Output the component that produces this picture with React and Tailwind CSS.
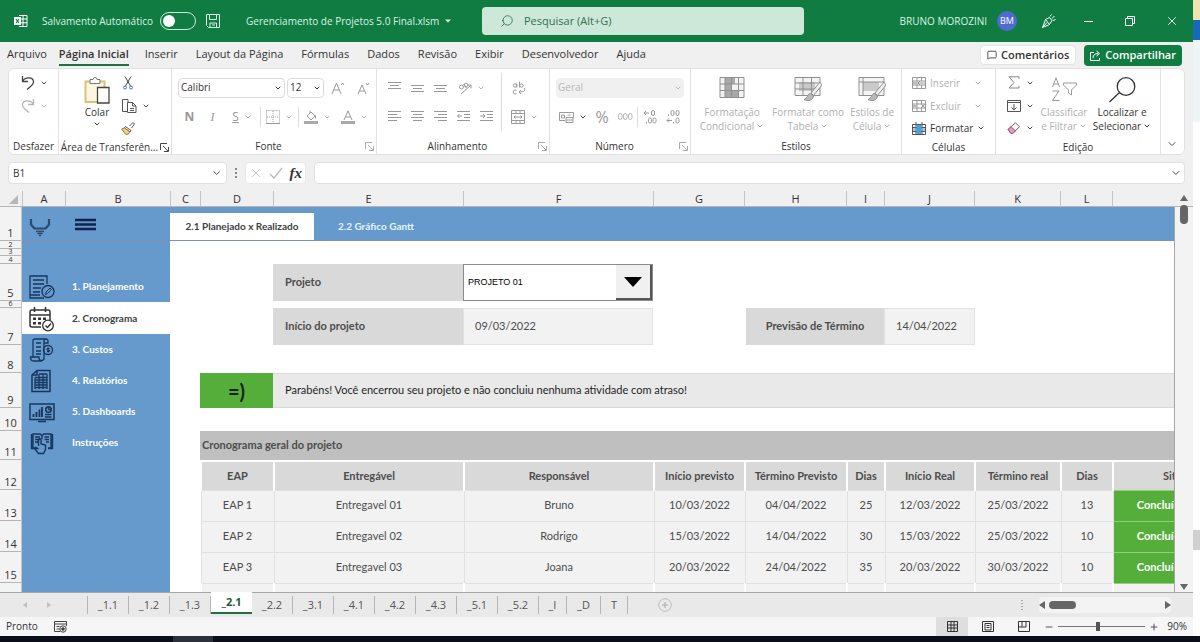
import React from 'react';
import { ChevronDown, MessageSquare, Minus, Plus, Search, X } from 'lucide-react';

const ribbonTabs = [
  'Arquivo',
  'Página Inicial',
  'Inserir',
  'Layout da Página',
  'Fórmulas',
  'Dados',
  'Revisão',
  'Exibir',
  'Desenvolvedor',
  'Ajuda'
];

const columns = [
  { name: 'A', width: 'w-[43px]' },
  { name: 'B', width: 'w-[105px]' },
  { name: 'C', width: 'w-[30px]' },
  { name: 'D', width: 'w-[73px]' },
  { name: 'E', width: 'w-[190px]' },
  { name: 'F', width: 'w-[190px]' },
  { name: 'G', width: 'w-[91px]' },
  { name: 'H', width: 'w-[102px]' },
  { name: 'I', width: 'w-[38px]' },
  { name: 'J', width: 'w-[90px]' },
  { name: 'K', width: 'w-[86px]' },
  { name: 'L', width: 'w-[52px]' }
];

// rows 2, 3, 4 and 6 are only spacers, so their numbers are set smaller
const rowHeaders = [
  { n: 1, height: 'h-[34px]' },
  { n: 2, height: 'h-2', small: true },
  { n: 3, height: 'h-[7px]', small: true },
  { n: 4, height: 'h-2', small: true },
  { n: 5, height: 'h-[37px]' },
  { n: 6, height: 'h-[7px]', small: true },
  { n: 7, height: 'h-[37px]' },
  { n: 8, height: 'h-7' },
  { n: 9, height: 'h-[35px]' },
  { n: 10, height: 'h-[23px]' },
  { n: 11, height: 'h-[29px]' },
  { n: 12, height: 'h-[30px]' },
  { n: 13, height: 'h-[31px]' },
  { n: 14, height: 'h-[31px]' },
  { n: 15, height: 'h-[31px]' }
];

const tableHead = [
  { label: 'EAP', width: 'w-[73px]' },
  { label: 'Entregável', width: 'w-[190px]' },
  { label: 'Responsável', width: 'w-[190px]' },
  { label: 'Início previsto', width: 'w-[91px]' },
  { label: 'Término Previsto', width: 'w-[102px]' },
  { label: 'Dias', width: 'w-[38px]' },
  { label: 'Início Real', width: 'w-[90px]' },
  { label: 'Término real', width: 'w-[86px]' },
  { label: 'Dias', width: 'w-[52px]' },
  { label: 'Situação', width: 'w-[142px]' }
];

const tableRows = [
  ['EAP 1', 'Entregavel 01', 'Bruno', '10/03/2022', '04/04/2022', '25', '12/03/2022', '25/03/2022', '13'],
  ['EAP 2', 'Entregavel 02', 'Rodrigo', '15/03/2022', '14/04/2022', '30', '15/03/2022', '25/03/2022', '10'],
  ['EAP 3', 'Entregavel 03', 'Joana', '20/03/2022', '24/04/2022', '35', '20/03/2022', '30/03/2022', '10']
];

const sheetTabs = ['_1.1', '_1.2', '_1.3', '_2.1', '_2.2', '_3.1', '_4.1', '_4.2', '_4.3', '_5.1', '_5.2'];

const Svg = ({ w = 16, h = 16, className = '', children }) => (
  <svg
    width={w}
    height={h}
    viewBox={`0 0 ${w} ${h}`}
    className={`shrink-0 ${className}`}
    fill="none"
    stroke="currentColor"
    strokeWidth="1"
    aria-hidden="true"
  >
    {children}
  </svg>
);

const Chevron = ({ className = 'text-[#444]' }) => (
  <ChevronDown size={8} strokeWidth={3} className={`shrink-0 ${className}`} />
);

/* ---------- title bar ---------- */

const ExcelLogo = () => (
  <Svg w={14} h={14} className="text-white">
    <path d="M5 1.5h8v11H5M5 5h8M5 8.8h8M9 1.5v11" />
    <path d="M0 3h7v8H0z" fill="#fff" stroke="none" />
    <path d="M2 5l3 4M5 5L2 9" stroke="#107c41" strokeWidth="1.2" />
  </Svg>
);

const TitleBar = () => (
  <header className="flex h-[42px] items-center bg-[#107c41] pl-[14px] text-[10px] text-white">
    <div className="flex w-[468px] shrink-0 items-center">
      <ExcelLogo />
      <label htmlFor="autosave" className="ml-[14px] whitespace-nowrap text-[#d6f5e3]">Salvamento Automático</label>
      <input
        id="autosave"
        type="checkbox"
        className="relative ml-[7px] h-[18px] w-9 shrink-0 appearance-none rounded-full border border-[#c9efd9] before:absolute before:left-0.5 before:top-0.5 before:size-3 before:rounded-full before:bg-white"
      />
      <button aria-label="Salvar" className="ml-[10px] text-[#d6f5e3]">
        <Svg w={14} h={14}>
          <path d="M.5.5h13v13h-11l-2-2zM3.5.5v5h7v-5M4 13.500V9h6.500v4.500M6 11h3" />
        </Svg>
      </button>
      <button className="ml-[26px] flex items-center gap-1.5 whitespace-nowrap text-[#d6f5e3]">
        Gerenciamento de Projetos 5.0 Final.xlsm
        <Svg w={6} h={4}>
          <path d="M0 .5h6l-3 3z" fill="currentColor" stroke="none" />
        </Svg>
      </button>
    </div>
    <label className="flex h-7 w-[322px] items-center rounded bg-[#cde8d9] pl-[18px] text-[11px] text-[#33704f]">
      <Search size={14} strokeWidth={1.5} className="shrink-0 -scale-x-100" />
      <input
        aria-label="Pesquisar"
        placeholder="Pesquisar (Alt+G)"
        className="ml-2.5 w-full bg-transparent outline-none placeholder:text-[#33704f]"
      />
    </label>
    <div className="flex flex-1 items-center justify-end pr-3.5">
      <span className="whitespace-nowrap text-[#d6f5e3]">BRUNO MOROZINI</span>
      <span className="ml-2.5 flex size-5 items-center justify-center rounded-full bg-[#4f6bd0] text-[9px]">BM</span>
      <button aria-label="Novidades" className="ml-6">
        <Svg w={15} h={15}>
          <path d="M1.500 13.500L4.500 5.500 8.500 3.500 11 6.500 8.500 10.500zM1.500 13.500L6 8.500M4.500 5.500l4 5M9 2.500L10.500.500M11 4.500L13.500 2M12 6.500l2.500-1" />
        </Svg>
      </button>
      <button aria-label="Minimizar" className="ml-7 h-px w-[9px] bg-white" />
      <button aria-label="Restaurar" className="ml-8">
        <Svg w={10} h={10}>
          <path d="M.5 2.500h7v7h-7zM2.500 2V.5h7v7H8" />
        </Svg>
      </button>
      <button aria-label="Fechar" className="ml-[30px]">
        <X size={14} strokeWidth={1.5} />
      </button>
    </div>
  </header>
);

const TabBar = () => (
  <nav className="flex h-[26px] items-center pl-[7px] pr-[11px] text-[11px] text-[#333]">
    <div className="flex flex-1 gap-[18px]">
      {ribbonTabs.map((tab) => (
        <button
          key={tab}
          className={
            tab === 'Página Inicial'
              ? '-ml-1.5 -mr-0.5 h-[22px] border-b-2 border-[#1e7145] font-semibold whitespace-nowrap'
              : 'h-[22px] border-b-2 border-transparent whitespace-nowrap'
          }
        >
          {tab}
        </button>
      ))}
    </div>
    <button className="flex h-5 items-center gap-1 rounded border border-[#e4e4e4] bg-white px-1.5 font-semibold">
      <MessageSquare size={10} />
      Comentários
    </button>
    <button className="ml-2 flex h-[21px] items-center gap-1 rounded bg-[#107c41] px-1.5 font-semibold text-white">
      <Svg w={11} h={11}>
        <path d="M4 2.500H.5v8h9V8M3 8c0-3 2-4.500 5-4.500M6.500 1l3 2.500-3 2.500" />
      </Svg>
      Compartilhar
    </button>
  </nav>
);

/* ---------- ribbon ---------- */

const Group = ({ title, width, launcher, launcherColor = 'text-[#aaa]', children }) => (
  <section className={`flex shrink-0 flex-col border-r border-[#e1e1e1] pt-0.5 ${width}`}>
    <div className="flex h-[68px]">{children}</div>
    <div className="flex items-center text-[10px] leading-4 text-[#333]">
      <h2 className="flex-1 text-center whitespace-nowrap">{title}</h2>
      {launcher && (
        <button aria-label={`Opções de ${title}`} className={`mr-0.5 ${launcherColor}`}>
          <Svg w={9} h={9}>
            <path d="M.5 7V.5H7M3 3l5 5M8.500 4v4.500H4" />
          </Svg>
        </button>
      )}
    </div>
  </section>
);

const Tool = ({ label, width = 'w-[23px]', height = 'h-[29px]', drop, dropColor = 'text-[#b5b5b5]', children }) => (
  <button aria-label={label} className={`flex shrink-0 items-center justify-center gap-[5px] ${height} ${width}`}>
    {children}
    {drop && <Chevron className={dropColor} />}
  </button>
);

const Divider = () => <span className="h-5 w-px shrink-0 bg-[#dcdcdc]" />;

const BigTool = ({ icon, lines, width, muted = true }) => (
  <button
    className={`flex shrink-0 flex-col items-center pt-1.5 text-[10px] leading-[14px] ${width} ${muted ? 'text-[#b0b0b0]' : 'text-[#333]'}`}
  >
    <span className="flex h-7 items-start">{icon}</span>
    <span className="whitespace-nowrap">{lines[0]}</span>
    <span className="flex items-center gap-0.5 whitespace-nowrap">
      {lines[1]}
      <Chevron className="" />
    </span>
  </button>
);

const Lines = ({ rows }) => (
  <Svg w={13} h={13} className="text-[#999]">
    {rows.map(([x1, x2], i) => (
      <path key={i} d={`M${x1} ${i * 3 + 1.5}H${x2}`} />
    ))}
  </Svg>
);

const RibbonSelect = ({ label, value, className, muted }) => (
  <span
    className={`relative flex h-5 items-center rounded-sm ${muted ? 'bg-[#f0f0f0] text-[#b8b8b8]' : 'border border-[#dcdcdc] bg-white text-[#333]'} ${className}`}
  >
    <select aria-label={label} className="h-full w-full appearance-none bg-transparent px-0.5 text-[10px] outline-none">
      <option>{value}</option>
    </select>
    <Chevron className="pointer-events-none absolute right-0.5" />
  </span>
);

const FontGroup = () => (
  <Group title="Fonte" width="w-[205px]" launcher>
    <div className="flex flex-col pl-1.5 pt-0.5">
      <div className="flex h-[29px] items-center gap-0.5">
        <RibbonSelect label="Fonte" value="Calibri" className="w-[107px]" />
        <RibbonSelect label="Tamanho" value="12" className="w-[37px]" />
        <Tool label="Aumentar fonte">
          <Svg w={14} h={14} className="text-[#999]">
            <path d="M1 13L5.500 2 10 13M2.500 9h6M10 4l1.500-2L13 4" />
          </Svg>
        </Tool>
        <Tool label="Diminuir fonte">
          <Svg w={14} h={14} className="text-[#999]">
            <path d="M2 13l4-9 4 9M3.500 10h5M10 2l1.500 2L13 2" />
          </Svg>
        </Tool>
      </div>
      <div className="flex h-[29px] items-center text-[12px] text-[#999]">
        <Tool label="Negrito"><b>N</b></Tool>
        <Tool label="Itálico"><i className="font-['Liberation_Serif']">I</i></Tool>
        <Tool label="Sublinhado" width="w-9" drop><u>S</u></Tool>
        <Divider />
        <Tool label="Bordas" width="w-[37px]" drop>
          <Svg w={14} h={14} className="text-[#999]">
            <path d="M.5.5h13v13M.5.5v13M7 1v12M1 7h12" strokeDasharray="1 1" />
            <path d="M0 13.500h14" />
          </Svg>
        </Tool>
        <Divider />
        <Tool label="Cor de preenchimento" width="w-[37px]" drop>
          <Svg w={14} h={14} className="text-[#999]">
            <path d="M3 6l4-4 4 4-4 4zM6 3V.5M11.500 5.500v3" />
            <path d="M0 12.500h14" strokeWidth="3" stroke="#aaa" />
          </Svg>
        </Tool>
        <Tool label="Cor da fonte" width="w-9" drop>
          <Svg w={14} h={14} className="text-[#999]">
            <path d="M3 10L7 .8 11 10M4.500 7h5" />
            <path d="M0 12.500h14" strokeWidth="3" stroke="#aaa" />
          </Svg>
        </Tool>
      </div>
    </div>
  </Group>
);

const AlignGroup = () => (
  <Group title="Alinhamento" width="w-[173px]" launcher>
    <div className="flex items-start pl-1.5 pt-0.5">
      <div className="flex w-[118px] flex-col">
        <div className="flex h-[29px] items-center">
          <Tool label="Alinhar em cima"><Lines rows={[[0, 13], [2, 11], [0, 13]]} /></Tool>
          <Tool label="Alinhar no meio"><Lines rows={[[0, 0], [0, 13], [2, 11], [0, 13]]} /></Tool>
          <Tool label="Alinhar embaixo"><Lines rows={[[0, 0], [0, 13], [2, 11], [0, 13]]} /></Tool>
          <Tool label="Orientação" width="w-[38px]" drop>
            <Svg w={14} h={14} className="text-[#999]">
              <path d="M3 13L13 4M13 4H9.500M13 4v3.500" />
              <circle cx="3.500" cy="6" r="2" />
              <path d="M5.500 3l3 4" />
              <circle cx="8" cy="4" r="1.800" />
            </Svg>
          </Tool>
        </div>
        <div className="flex h-[29px] items-center">
          <Tool label="Alinhar à esquerda"><Lines rows={[[0, 13], [0, 9], [0, 13], [0, 9]]} /></Tool>
          <Tool label="Centralizar"><Lines rows={[[0, 13], [2, 11], [0, 13], [2, 11]]} /></Tool>
          <Tool label="Alinhar à direita"><Lines rows={[[0, 13], [4, 13], [0, 13], [4, 13]]} /></Tool>
          <Tool label="Diminuir recuo">
            <Svg w={13} h={13} className="text-[#999]">
              <path d="M0 1.500h13M7 4.500h6M7 7.500h6M0 10.500h13M5 6H.5M2.500 4l-2 2 2 2" />
            </Svg>
          </Tool>
          <Tool label="Aumentar recuo">
            <Svg w={13} h={13} className="text-[#999]">
              <path d="M0 1.500h13M7 4.500h6M7 7.500h6M0 10.500h13M0 6h5M3 4l2 2-2 2" />
            </Svg>
          </Tool>
        </div>
      </div>
      <span className="h-[58px] w-px bg-[#dcdcdc]" />
      <div className="flex flex-col">
        <Tool label="Quebrar texto" width="w-[33px]">
          <Svg w={14} h={14} className="text-[#999]">
            <circle cx="3" cy="4.500" r="1.700" />
            <path d="M4.800 2.500v4M7.500.5v6M4.500 9.500a2 2 0 1 0 0 3M12.500 7c1 3-1 4-5 4M9 9l-2 2 2 2" />
            <circle cx="9.500" cy="4.500" r="1.700" />
          </Svg>
        </Tool>
        <Tool label="Mesclar" width="w-[44px]" drop>
          <Svg w={14} h={14} className="text-[#999]">
            <path d="M.5.5h13v13H.5zM.5 3.500h13M.5 10.500h13M5 .5v3M9 .5v3M5 10.500v3M9 10.500v3M3 7h8M4.500 5.500L3 7l1.500 1.500M9.500 5.500L11 7 9.500 8.500" />
          </Svg>
        </Tool>
      </div>
    </div>
  </Group>
);

const NumberGroup = () => (
  <Group title="Número" width="w-[141px]" launcher>
    <div className="flex flex-col pl-1.5 pt-0.5">
      <div className="flex h-[29px] items-center">
        <RibbonSelect label="Formato" value="Geral" muted className="w-[128px]" />
      </div>
      <div className="flex h-[29px] items-center text-[#999]">
        <Tool label="Moeda" width="w-[34px]" drop dropColor="text-[#444]">
          <Svg w={15} h={13}>
            <path d="M.5 2.500h14v5H7M.5 2.500v8H6M8.500 5h3M2.500 5h3v3h-3z" />
            <path d="M7 7.500h7v5H7zM7 10h7" />
          </Svg>
        </Tool>
        <span className="w-6 text-center text-[16px]">%</span>
        <Tool label="Separador de milhares">
          <Svg w={15} h={8} className="text-[#b5b5b5]">
            <rect x=".5" y=".5" width="3.500" height="6" rx="1.700" />
            <rect x="5.500" y=".5" width="3.500" height="6" rx="1.700" />
            <rect x="10.500" y=".5" width="3.500" height="6" rx="1.700" />
          </Svg>
        </Tool>
        <Divider />
        <Tool label="Aumentar casas">
          <Svg w={14} h={14}>
            <path d="M6 3H1M3 1L1 3l2 2M3.500 12v1.500" />
            <rect x="8.500" y=".5" width="3" height="5" rx="1.500" />
            <rect x="5.500" y="8" width="3" height="5" rx="1.500" />
            <rect x="10" y="8" width="3" height="5" rx="1.500" />
          </Svg>
        </Tool>
        <Tool label="Diminuir casas">
          <Svg w={14} h={14}>
            <path d="M1 10.500h5M3 8.500l-2 2 2 2M2.500 4.500V6M7.500 12v1.500" />
            <rect x="5" y=".5" width="3" height="5" rx="1.500" />
            <rect x="10" y=".5" width="3" height="5" rx="1.500" />
            <rect x="10" y="8" width="3" height="5" rx="1.500" />
          </Svg>
        </Tool>
      </div>
    </div>
  </Group>
);

const CondFormatIcon = () => (
  <Svg w={26} h={21} className="text-[#8f8f8f]">
    <path d="M1 .5h24v20H1z" fill="#f2f2f2" />
    <path d="M6 1h10v6H6zM6 7h6v6H6zM6 13h13v7H6z" fill="#a9a9a9" stroke="none" />
    <path d="M1 7h24M1 13.500h24M6 .5v20M19.500.5v20M12.500.5v20" />
  </Svg>
);

const TableBrushIcon = ({ plain }) => (
  <Svg w={28} h={26} className="text-[#8f8f8f]">
    <path d="M1 .5h25v18H1z" fill="#f4f4f4" />
    <path d="M5 5h16v9H5z" fill="#c9c9c9" stroke="none" />
    <path d={plain ? 'M1 5h25M5 .5v18' : 'M1 6h25M1 12h25M9 .5v18M17.500.5v18'} />
    <path d="M26 5l-9 11 2.500 2.500L28 8z" fill="#eee" />
    <path d="M16.500 16.500c-3 0-2.500 4-6.500 6 4 2 9 1 9.500-3.500z" fill="#b9b9b9" />
  </Svg>
);

const CellIcon = ({ remove }) => (
  <Svg w={14} h={12} className="text-[#999]">
    <path d="M.5.5h13v11H.5zM.5 4h13M.5 8h13M5 .5v11M9.500.5v3.500M9.500 8v3.500" />
    <path d={remove ? 'M9 4l4 4M13 4L9 8' : 'M13 6H6M8 4L6 6l2 2'} />
    <path d="M1 4.500h4v3H1z" fill="#bbb" stroke="none" />
  </Svg>
);

const Ribbon = () => (
  <div className="mx-2 flex h-[87px] overflow-hidden rounded-md border border-[#e1e1e1] bg-white">
    <Group title="Desfazer" width="w-[50px]">
      <div className="flex flex-col pl-[11px]">
        <Tool label="Desfazer" width="w-7" height="h-[23px]" drop dropColor="text-[#444]">
          <Svg w={14} h={15} className="text-[#444]">
            <path d="M1.500 1v5.500H7M1.500 6.500C4 1.500 12.500 1.500 12.500 7c0 3-4 5-6.500 7.500" strokeWidth="1.3" />
          </Svg>
        </Tool>
        <Tool label="Refazer" width="w-7" height="h-[23px]" drop dropColor="text-[#c4c4c4]">
          <Svg w={14} h={15} className="text-[#b5b5b5]">
            <path d="M12.500 1v5.500H7M12.500 6.500C10 1.500 1.500 1.500 1.500 7c0 3 4 5 6.500 7.500" strokeWidth="1.3" />
          </Svg>
        </Tool>
      </div>
    </Group>

    <Group title="Área de Transferên..." width="w-[113px]" launcher launcherColor="text-[#444]">
      <button className="ml-5 flex w-9 flex-col items-center pt-1.5 text-[10px] leading-4 text-[#333]">
        <Svg w={26} h={27}>
          <path d="M1.500 4.500h19V25h-19z" fill="#fbf6df" stroke="#d8c27a" strokeWidth="2" />
          <path d="M6 6.500v-4h3a2 2 0 0 1 4 0h3v4z" fill="#fff" stroke="#777" />
          <path d="M13.500 10.500H25V26H13.500z" fill="#fff" stroke="#444" strokeWidth="1.3" />
        </Svg>
        <span>Colar</span>
        <Chevron />
      </button>
      <div className="flex flex-col items-start pl-1">
        <Tool label="Recortar" width="w-[18px]" height="h-[23px]">
          <Svg w={10} h={14} className="text-[#444]">
            <path d="M2 .5L7.500 10M8 .5L2.500 10" />
            <circle cx="2" cy="11.500" r="1.500" stroke="#3a78b5" />
            <circle cx="8" cy="11.500" r="1.500" stroke="#3a78b5" />
          </Svg>
        </Tool>
        <Tool label="Copiar" width="w-[34px]" height="h-[23px]" drop dropColor="text-[#444]">
          <Svg w={15} h={14} className="text-[#555]">
            <path d="M5 12.500H.5V.5H6V3M5.500 3.500h5l3.500 3.500v6.500H5.500zM10.500 3.500V7H14M8 9.500h4M8 11.500h4" />
          </Svg>
        </Tool>
        <Tool label="Pincel de formatação" width="w-[18px]" height="h-[22px]">
          <Svg w={14} h={13}>
            <path d="M8.500 4L12 .5l1.500 1.500L10.500 6" stroke="#555" />
            <path d="M4.500 4.500l5.500 4-1 1.500L3.500 6z" fill="#fff" stroke="#555" />
            <path d="M3.500 6L9 10c-1 2-3 2.500-4 2.500L.5 7z" fill="#f1d384" stroke="#a07a2a" />
          </Svg>
        </Tool>
      </div>
    </Group>

    <FontGroup />
    <AlignGroup />
    <NumberGroup />

    <Group title="Estilos" width="w-[211px]">
      <div className="flex pl-[3px]">
        <BigTool icon={<CondFormatIcon />} lines={['Formatação', 'Condicional']} width="w-[76px]" />
        <BigTool icon={<TableBrushIcon />} lines={['Formatar como', 'Tabela']} width="w-[76px]" />
        <BigTool icon={<TableBrushIcon plain />} lines={['Estilos de', 'Célula']} width="w-[52px]" />
      </div>
    </Group>

    <Group title="Células" width="w-[94px]">
      <div className="flex flex-col pl-2.5 text-[10px] leading-4 text-[#b0b0b0]">
        <button className="flex h-[23px] items-center gap-1">
          <CellIcon />
          <span className="w-10 text-left">Inserir</span>
          <Chevron className="" />
        </button>
        <button className="flex h-[23px] items-center gap-1">
          <CellIcon remove />
          <span className="w-10 text-left">Excluir</span>
          <Chevron className="" />
        </button>
        <button className="flex h-[22px] items-center gap-1 text-[#333]">
          <Svg w={14} h={13} className="text-[#555]">
            <path d="M.5 2.500h13v10H.5zM4 0v12.500M10 0v12.500M.5 5.500h13M.5 9.500h13" />
            <path d="M4.500 3h5v9h-5z" fill="#4aa0dc" stroke="none" />
            <path d="M1 6h12v3H1z" fill="#4aa0dc" fillOpacity=".5" stroke="none" />
          </Svg>
          Formatar
          <Chevron />
        </button>
      </div>
    </Group>

    <Group title="Edição" width="w-[165px]">
      <div className="flex flex-col pl-1.5">
        <Tool label="Soma" width="w-9" height="h-[23px]" drop dropColor="text-[#444]">
          <Svg w={14} h={13} className="text-[#888]">
            <path d="M12 3V.8H2L7 6.500 2 12h10v-2.200" />
          </Svg>
        </Tool>
        <Tool label="Preencher" width="w-9" height="h-[23px]" drop dropColor="text-[#444]">
          <Svg w={14} h={12} className="text-[#555]">
            <path d="M.5.5h13v11H.5zM.5 2.500h13M7 4v6M4.500 7.500L7 10l2.500-2.500" />
          </Svg>
        </Tool>
        <Tool label="Limpar" width="w-9" height="h-[22px]" drop dropColor="text-[#444]">
          <Svg w={14} h={13}>
            <path d="M1 7.500L8.500.8l4 4L5.500 11.500H4z" fill="#fff" stroke="#666" />
            <path d="M1 7.500l3-2.800L8.500 9l-3 2.500H4z" fill="#e59ac0" stroke="#a0527c" />
          </Svg>
        </Tool>
      </div>
      <BigTool
        width="w-[52px]"
        lines={['Classificar', 'e Filtrar']}
        icon={
          <Svg w={26} h={25} className="text-[#999]">
            <path d="M1.500 10L5 .8 8.500 10M2.800 7h4.500M1.500 14H8l-6.500 9.500H8.500" />
            <path d="M12.500 6h13v2l-5 5v5l-3-2v-3l-5-5z" />
          </Svg>
        }
      />
      <BigTool
        width="w-[64px]"
        muted={false}
        lines={['Localizar e', 'Selecionar']}
        icon={
          <Svg w={28} h={26}>
            <circle cx="18" cy="9.500" r="8.800" strokeWidth="1.3" />
            <path d="M11.500 15.500L1.500 25" strokeWidth="1.3" />
          </Svg>
        }
      />
    </Group>

    <button aria-label="Recolher faixa" className="ml-auto mr-1.5 self-end pb-1 text-[#444]">
      <ChevronDown size={12} strokeWidth={1.8} />
    </button>
  </div>
);

const FormulaBar = () => (
  <div className="flex h-9 items-center gap-2 px-2 text-[#333]">
    <label className="flex h-[22px] w-[219px] items-center rounded border border-[#e1e1e1] bg-white pl-1 pr-1">
      <input aria-label="Caixa de nome" defaultValue="B1" className="w-full bg-transparent text-[10px] outline-none" />
      <ChevronDown size={12} strokeWidth={1.8} />
    </label>
    <Svg w={2} h={10} className="text-[#888]">
      <path d="M1 0v10" strokeDasharray="2 2" strokeWidth="2" />
    </Svg>
    <div className="flex h-[22px] w-[61px] items-center justify-around rounded border border-[#e8e8e8] bg-white">
      <button aria-label="Cancelar" className="text-[#bbb]">
        <X size={14} strokeWidth={1.5} />
      </button>
      <button aria-label="Inserir" className="text-[#bbb]">
        <Svg w={14} h={12}>
          <path d="M1 7l4 4 8-10" strokeWidth="1.3" />
        </Svg>
      </button>
      <button className="font-['Liberation_Serif'] text-[15px] font-bold italic leading-5">fx</button>
    </div>
    <label className="flex h-[22px] flex-1 items-center rounded border border-[#e1e1e1] bg-white pr-0.5">
      <input aria-label="Barra de fórmulas" className="w-full bg-transparent px-1 text-[11px] outline-none" />
      <ChevronDown size={12} strokeWidth={1.8} />
    </label>
  </div>
);

/* ---------- sheet ---------- */

const ColumnHeader = () => (
  <div className="flex h-4 items-end border-b border-[#b5b5b5] text-[11px] leading-4 text-[#333]">
    <span className="flex h-[15px] w-[23px] shrink-0 items-end justify-end border-r border-[#c4c4c4] pb-0.5 pr-1">
      <Svg w={9} h={9}>
        <path d="M9 0v9H0z" fill="#b8b8b8" stroke="none" />
      </Svg>
    </span>
    {columns.map((col) => (
      <span
        key={col.name}
        className={`flex h-[15px] shrink-0 items-center justify-center border-r border-[#c4c4c4] ${col.width}`}
      >
        {col.name}
      </span>
    ))}
  </div>
);

const RowHeader = () => (
  <div className="flex w-[22px] shrink-0 flex-col border-r border-[#c4c4c4] bg-[#f3f3f3] text-[#333]">
    {rowHeaders.map((row) => (
      <span
        key={row.n}
        className={`flex shrink-0 items-end justify-center border-b border-[#b5b5b5] ${row.height} ${row.small ? 'text-[7px] leading-[6px]' : 'text-[11px] leading-[14px]'}`}
      >
        {row.n}
      </span>
    ))}
  </div>
);

const PlanIcon = () => (
  <Svg w={26} h={25}>
    <path d="M18 9V1H1v22h14M4 5h11M4 9h11M4 13h8M4 17h7M1 20h10" strokeWidth="1.3" />
    <circle cx="19" cy="16.500" r="6" strokeWidth="1.3" />
    <path d="M16.500 19.500l.5-2.500 4-4 1.500 1.500-4 4z" />
  </Svg>
);

const CalendarIcon = () => (
  <Svg w={26} h={25}>
    <path d="M12 20H3a2 2 0 0 1-2-2V5a2 2 0 0 1 2-2h16a2 2 0 0 1 2 2v8M1 8h20M5.500 0v5M16.500 0v5" strokeWidth="1.5" />
    <path d="M4 10.500h3v2.500H4zM9 10.500h3v2.500H9zM14 10.500h3v2.500h-3zM4 15h3v2.500H4zM9 15h3v2.500H9z" fill="currentColor" stroke="none" />
    <circle cx="19" cy="18.500" r="5.300" strokeWidth="1.3" fill="#fff" />
    <path d="M16.500 18.500l2 2 3.500-4" strokeWidth="1.5" />
  </Svg>
);

const CostIcon = () => (
  <Svg w={26} h={25}>
    <path d="M4 19V3a2 2 0 0 1 2-2h11a2 2 0 0 0-2 2v17a2.500 2.500 0 0 1-5 0v-1H1.500c0 3 1 4 3 4H13M15 5h4V3a2 2 0 0 0-2-2M7 5h5M7 9h5M7 13h5M7 16h5" strokeWidth="1.3" />
    <circle cx="19" cy="12" r="4.500" strokeWidth="1.3" />
    <path d="M20.500 10.500h-2.500v1.500h2.500v1.500H18M19.200 9.500v5" />
  </Svg>
);

const ReportIcon = () => (
  <Svg w={26} h={25}>
    <path d="M8 1.500h13v21H3V6zM8 1.500V6H3" strokeWidth="1.5" />
    <path d="M6 8.500h12M6 11h12M6 13.500h12M6 16h12M6 18.500h12M6 8.500V20M10 5v15M14 5v15M18 5v15M10 5h8" strokeWidth="1.3" />
  </Svg>
);

const DashboardIcon = () => (
  <Svg w={26} h={25}>
    <path d="M1 4h24v15.500H1zM9 21.500h8" strokeWidth="1.5" />
    <path d="M4.500 17v-3M7.500 17v-5M10.500 17V9.500M13 17V7" strokeWidth="1.8" />
    <circle cx="19.500" cy="9.500" r="2.800" strokeWidth="1.5" />
    <path d="M19.500 9.500V7M19.500 9.500h3M16 14.500h6.500M16 17h6.500" strokeWidth="1.5" />
  </Svg>
);

const GuideIcon = () => (
  <Svg w={26} h={25}>
    <path d="M8 17H4V3h7l2 1.500L15 3h7v14h-3M13 4.500V8M2.500 3v14.500H8M23.500 3v14.500H19M6 6h5M6 8.500h5M6 11h3M15.500 6h4.500M15.500 8.500h4.500M17 11h3" strokeWidth="1.4" />
    <path d="M9.500 15V9a1.300 1.300 0 0 1 2.600 0V13l4.400 1v4.500L14.500 22.500h-5L6 18l1-1.500 2.500 1.500" strokeWidth="1.4" />
  </Svg>
);

const navItems = [
  { label: '1. Planejamento', icon: PlanIcon },
  { label: '2. Cronograma', icon: CalendarIcon, active: true },
  { label: '3. Custos', icon: CostIcon },
  { label: '4. Relatórios', icon: ReportIcon },
  { label: '5. Dashboards', icon: DashboardIcon },
  { label: 'Instruções', icon: GuideIcon }
];

const Sidebar = () => (
  <aside className="w-[148px] shrink-0 bg-[#6699cc] font-['Lato',sans-serif] text-[10px] font-bold">
    <div className="flex h-[34px] items-center border-b border-[#7d95ad] pl-[7px]">
      <Svg w={22} h={20} className="mt-2 text-[#2c4a6e]">
        <path d="M2 1v5.500l3.500 4h11l3.500-4V1" strokeWidth="2.2" />
        <path d="M7 13.500h8M8.500 15.500h5M10 17.500h2" strokeWidth="1.3" />
      </Svg>
      <button aria-label="Menu" className="ml-6">
        <Svg w={22} h={14} className="text-[#10234a]">
          <path d="M0 3h21M0 7.500h21M0 12h21" strokeWidth="2.4" />
        </Svg>
      </button>
    </div>
    <nav className="flex flex-col pt-[30px]">
      {navItems.map(({ label, icon: Icon, active }) => (
        <a
          key={label}
          href="#"
          className={`flex items-center pl-[7px] ${active ? 'h-8 bg-white text-[#404040]' : 'h-[31px] text-white'}`}
        >
          <span className={active ? 'pt-0.5 text-[#333]' : 'pt-0.5 text-[#16365c]'}>
            <Icon />
          </span>
          <span className="ml-[17px]">{label}</span>
        </a>
      ))}
    </nav>
  </aside>
);

const Project = () => (
  <div className="ml-[73px] flex flex-col gap-[7px] text-[11px] text-[#4d4d4d]">
    <div className="flex h-[37px]">
      <label htmlFor="projeto" className="flex w-[190px] items-center bg-[#d9d9d9] pl-3 font-bold">Projeto</label>
      <span className="relative flex w-[190px] border border-[#8c8c8c] bg-white">
        <select
          id="projeto"
          className="h-full w-full appearance-none bg-transparent pl-1 font-['Liberation_Sans',sans-serif] text-[9px] text-black outline-none"
        >
          <option>PROJETO 01</option>
        </select>
        <span className="pointer-events-none absolute inset-y-0 right-0 flex w-9 items-center justify-center border-b-2 border-r-2 border-[#555] bg-[#f0f0f0] text-black">
          <Svg w={18} h={10}>
            <path d="M0 0h18l-9 10z" fill="currentColor" stroke="none" />
          </Svg>
        </span>
      </span>
    </div>
    <div className="flex h-[37px]">
      <span className="flex w-[190px] items-center bg-[#d9d9d9] pl-3 font-bold">Início do projeto</span>
      <span className="flex w-[190px] items-center border border-[#e3e3e3] bg-[#f2f2f2] pl-[11px]">09/03/2022</span>
      <span className="ml-[93px] flex w-[138px] items-center justify-center bg-[#d9d9d9] font-bold">Previsão de Término</span>
      <span className="flex w-[91px] items-center border border-[#e3e3e3] bg-[#f2f2f2] pl-[11px]">14/04/2022</span>
    </div>
  </div>
);

const Schedule = () => (
  <table className="w-[1054px] table-fixed border-collapse text-center text-[11px] text-[#4d4d4d]">
    <thead>
      <tr className="h-[29px]">
        {tableHead.map((col, i) => (
          <th
            key={i}
            className={`whitespace-nowrap border-x-2 border-t-2 border-white bg-[#d9d9d9] p-0 font-bold ${col.width}`}
          >
            {col.label}
          </th>
        ))}
      </tr>
    </thead>
    <tbody>
      {tableRows.map((row) => (
        <tr key={row[0]} className="h-[31px]">
          {row.map((cell, i) => (
            <td key={i} className="border border-[#e0e0e0] bg-[#f2f2f2] p-0">{cell}</td>
          ))}
          <td className="border border-[#8fd07c] bg-[#55ae3a] p-0 font-bold text-white">Concluído no prazo</td>
        </tr>
      ))}
      <tr className="h-[31px]">
        {tableHead.map((col, i) => (
          <td key={i} className="border-x-2 border-white bg-[#f2f2f2] p-0" />
        ))}
      </tr>
    </tbody>
  </table>
);

const Sheet = () => (
  <main className="flex min-w-0 flex-1 flex-col overflow-hidden border-r border-[#a6a6a6] bg-white font-['Lato',sans-serif]">
    <div className="flex h-[34px] shrink-0 items-end border-b border-[#7d95ad] bg-[#6699cc] text-[10px] font-bold">
      <a href="#" className="flex h-[27px] w-36 items-center justify-center bg-white text-[#404040]">2.1 Planejado x Realizado</a>
      <a href="#" className="flex h-[27px] items-center pl-6 text-[#e3f4fb]">2.2 Gráfico Gantt</a>
    </div>
    <div className="flex flex-1 flex-col overflow-hidden pl-[30px] pt-[23px]">
      <Project />
      <div className="mt-7 flex h-[35px] shrink-0 text-[11px] text-[#1f1f1f]">
        <span className="flex w-[73px] items-center justify-center bg-[#55ae3a] text-[20px] font-bold">=)</span>
        <p className="flex flex-1 items-center border-y border-[#dadada] bg-[#e9e9e9] pl-3">
          Parabéns! Você encerrou seu projeto e não concluiu nenhuma atividade com atraso!
        </p>
      </div>
      <h1 className="mt-[23px] flex h-[29px] shrink-0 items-center bg-[#bfbfbf] pl-0.5 text-[11px] font-bold text-[#4d4d4d]">
        Cronograma geral do projeto
      </h1>
      <Schedule />
    </div>
  </main>
);

const VerticalScroll = () => (
  <div className="flex w-[18px] shrink-0 flex-col items-center bg-[#f3f3f3] text-[#666]">
    <Svg w={8} h={6} className="-mt-3">
      <path d="M4 0l4 6H0z" fill="currentColor" stroke="none" />
    </Svg>
    <span className="mt-1 h-[19px] w-2 rounded-full bg-[#666]" />
    <Svg w={8} h={6} className="mt-auto mb-0.5">
      <path d="M4 6l4-6H0z" fill="currentColor" stroke="none" />
    </Svg>
  </div>
);

const SheetTabs = () => (
  <div className="flex h-[25px] items-center border-t border-[#a6a6a6] bg-[#e9e9e9] text-[11px] text-[#555]">
    <div className="flex w-[87px] shrink-0 gap-5 pl-[23px] text-[#c0c0c0]">
      <Svg w={4} h={6}>
        <path d="M4 0v6L0 3z" fill="currentColor" stroke="none" />
      </Svg>
      <Svg w={4} h={6}>
        <path d="M0 0v6l4-3z" fill="currentColor" stroke="none" />
      </Svg>
    </div>
    <span className="h-[18px] w-px bg-[#b5b5b5]" />
    {sheetTabs.map((tab) =>
      tab === '_2.1' ? (
        <button key={tab} className="-mt-1 h-[22px] w-[41px] border-b-2 border-[#1e7145] bg-white font-bold text-[#1e5a3a]">
          {tab}
        </button>
      ) : (
        <button key={tab} className="h-[18px] w-[41px] border-r border-[#b5b5b5] leading-4">{tab}</button>
      )
    )}
    <button className="h-[18px] w-7 border-r border-[#b5b5b5] leading-4">_I</button>
    <button className="h-[18px] w-[34px] border-r border-[#b5b5b5] leading-4">_D</button>
    <button className="h-[18px] w-[27px] border-r border-[#b5b5b5] leading-4">T</button>
    <button aria-label="Nova planilha" className="ml-[30px] text-[#bdbdbd]">
      <Svg w={14} h={14}>
        <circle cx="7" cy="7" r="6.300" />
        <path d="M7 4v6M4 7h6" strokeWidth="1.5" />
      </Svg>
    </button>
    <div className="ml-auto flex items-center pr-[22px] text-[#666]">
      <Svg w={2} h={10} className="mr-4 text-[#aaa]">
        <path d="M1 0v10" strokeDasharray="1 2" strokeWidth="2" />
      </Svg>
      <div className="flex h-4 w-[132px] items-center rounded bg-[#f3f3f3]">
        <Svg w={6} h={8}>
          <path d="M6 0v8L0 4z" fill="currentColor" stroke="none" />
        </Svg>
        <span className="ml-1 h-2 w-[27px] rounded-full bg-[#666]" />
        <Svg w={6} h={8} className="ml-auto">
          <path d="M0 0v8l6-4z" fill="currentColor" stroke="none" />
        </Svg>
      </div>
    </div>
  </div>
);

const StatusBar = () => (
  <footer className="flex h-[19px] items-center bg-[#f6f6f7] px-1.5 text-[10px] text-[#333]">
    <span>Pronto</span>
    <button aria-label="Gravar macro" className="ml-4">
      <Svg w={13} h={12} className="text-[#444]">
        <path d="M12.500 5V.5H.5v10H6M.5 3h12M2.500 5.500h3M2.500 8h3" />
        <circle cx="9" cy="8" r="3.200" />
        <circle cx="9" cy="8" r="1.300" fill="currentColor" />
      </Svg>
    </button>
    <div className="ml-auto flex h-full items-center text-[#333]">
      <button aria-label="Normal" className="flex h-full w-8 items-center justify-center bg-[#dedede]">
        <Svg w={11} h={11}>
          <path d="M.5.5h10v10H.5zM4 .5v10M7 .5v10M.5 4h10M.5 7h10" />
        </Svg>
      </button>
      <button aria-label="Layout da página" className="flex w-10 justify-center">
        <Svg w={12} h={11}>
          <path d="M.5.5h11v10H.5zM3 2.500h6v6.500H3zM4.500 4.500h3M4.500 6.500h3" />
        </Svg>
      </button>
      <button aria-label="Quebra de página" className="flex w-8 justify-center">
        <Svg w={12} h={11}>
          <path d="M.5.5h11v10H.5zM4 .5v5.500h4V.5M.5 6H4" />
        </Svg>
      </button>
      <button aria-label="Diminuir zoom" className="ml-1"><Minus size={10} strokeWidth={2} /></button>
      <input
        aria-label="Zoom"
        type="range"
        min="0"
        max="100"
        defaultValue="45"
        className="mx-1 h-px w-[87px] appearance-none bg-[#777] [&::-webkit-slider-thumb]:h-[9px] [&::-webkit-slider-thumb]:w-1 [&::-webkit-slider-thumb]:appearance-none [&::-webkit-slider-thumb]:bg-[#555]"
      />
      <button aria-label="Aumentar zoom"><Plus size={10} strokeWidth={2} /></button>
      <span className="ml-2">90%</span>
    </div>
  </footer>
);

const ExcelWindow = () => (
  <div className="flex min-w-0 flex-1 flex-col bg-[#f0f0f0]">
    <TitleBar />
    <TabBar />
    <Ribbon />
    <FormulaBar />
    <ColumnHeader />
    <div className="flex min-h-0 flex-1">
      <RowHeader />
      <Sidebar />
      <Sheet />
      <VerticalScroll />
    </div>
    <SheetTabs />
    <StatusBar />
  </div>
);

const App = () => (
  <div className="flex h-screen flex-col overflow-hidden bg-white font-['Open_Sans',sans-serif]">
    <div className="flex min-h-0 flex-1">
      <ExcelWindow />
      {/* window left open behind, only its edge shows */}
      <div className="flex w-[7px] shrink-0 flex-col bg-white">
        <span className="h-5 bg-[#ece5ae]" />
        <span className="h-5 bg-[#1769b5]" />
        <span className="h-[82px] bg-[#eff4f7]" />
        <span className="mt-auto mb-[86px] h-5 bg-[#d0d0d0]" />
      </div>
    </div>
    <div className="flex h-1.5 shrink-0 bg-[#0b0e18] pl-[173px]">
      <span className="w-10 bg-[#2c303b]" />
    </div>
  </div>
);

export default App;
